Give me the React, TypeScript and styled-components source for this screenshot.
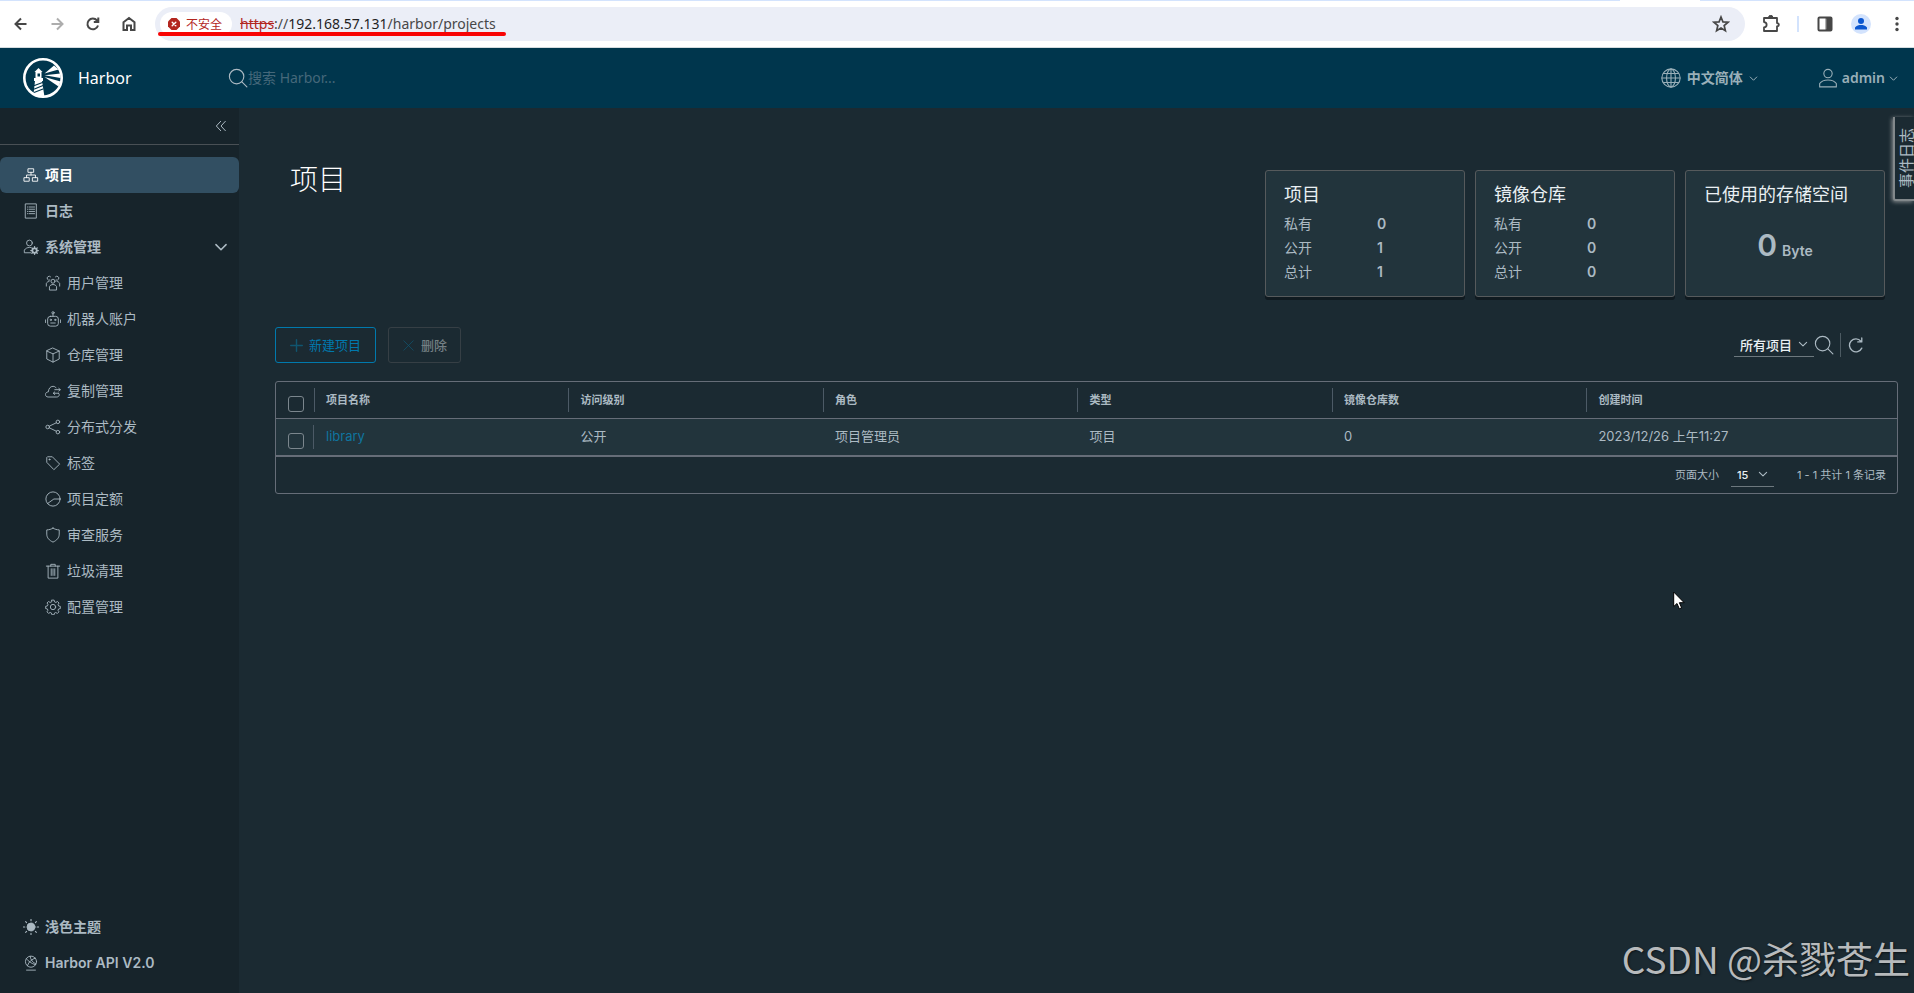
import React from "react";
import styled, { createGlobalStyle } from "styled-components";

const cjk = `"Noto Sans CJK SC", sans-serif`;
const ui = `"Noto Sans", ${cjk}`;
const brand = `Inter, ${cjk}`;

const Global = createGlobalStyle`
  *, *::before, *::after { box-sizing: border-box; }
  html, body, #root { height: 100%; }
  body { margin: 0; background: #1b2a32; color: #acbac3; font: 14px/24px ${brand}; }
  button, input, select { font: inherit; color: inherit; margin: 0; }
  button { background: none; border: 0; padding: 0; cursor: pointer; }
  a { color: inherit; text-decoration: none; }
  h1, h2, ul, dl, dd, p { margin: 0; padding: 0; font-weight: 400; }
  ul { list-style: none; }
`;

const Page = styled.div`
  display: flex;
  flex-direction: column;
  min-height: 100vh;
  position: relative;
  overflow: hidden;
`;

/* ---------- icons ---------- */
const Svg = styled.svg<{ $size: number; $w?: number }>`
  width: ${(p) => p.$size}px;
  height: ${(p) => p.$size}px;
  flex: none;
  display: block;
  fill: none;
  stroke: currentColor;
  stroke-width: ${(p) => p.$w ?? 2};
  stroke-linecap: round;
  stroke-linejoin: round;
`;

const shapes: Record<string, React.ReactNode> = {
  organization: (
    <path d="M12 4h12v8H12zM3 24h11v8H3zM22 24h11v8H22zM18 12v6M8 24v-6h20v6" />
  ),
  list: (
    <>
      <path d="M6 2h24v32H6z" />
      <path d="M10 9h1M14 9h12M10 14h1M14 14h12M10 19h1M14 19h12M10 24h1M14 24h12" />
    </>
  ),
  administrator: (
    <>
      <circle cx="14.5" cy="9" r="6.5" />
      <path d="M17 31H3v-6c2.600-4 6.600-6 11.500-6h3" />
      <circle cx="26" cy="26" r="5" strokeWidth="4" />
      <path d="M26 17.500v2M26 32.500v2M17.500 26h2M32.500 26h2M20 20l1.500 1.500M30.500 30.500L32 32M32 20l-1.500 1.500M20 32l1.500-1.500" strokeWidth="3" />
    </>
  ),
  users: (
    <>
      <circle cx="18" cy="14" r="4.500" />
      <path d="M10 33v-7c2-3.500 5-4.500 8-4.500s6 1 8 4.500v7z" />
      <path d="M11 11.500A4.500 4.500 0 1 1 12.500 4M25 11.500A4.500 4.500 0 1 0 23.500 4M3 25v-6c1-2.500 3-4 6-4.500M33 25v-6c-1-2.500-3-4-6-4.500" />
    </>
  ),
  robot: (
    <>
      <rect x="6" y="12" width="24" height="22" rx="6" />
      <path d="M18 12V7M13 27h10M1 20v6M35 20v6" />
      <circle cx="18" cy="4" r="2.500" />
      <circle cx="13" cy="20" r="1.500" />
      <circle cx="23" cy="20" r="1.500" />
    </>
  ),
  block: <path d="M18 2.500L32 9v18l-14 7-14-7V9zM4 9l14 6.500L32 9M18 15.500V34" />,
  cloud: (
    <>
      <path d="M30 23c2 1.500 2 2.500 2 3.500 0 3-2.500 5-5.500 5H7c-3.500 0-6-2.500-6-5.500 0-3.500 3-6 6.500-6C8 12.500 12 7.500 18 7.500c3 0 5.500 1.200 7 3.500" />
      <path d="M22 15h12M31 12l3.500 3-3.500 3M31 23H19M22 20l-3.500 3 3.500 3" />
    </>
  ),
  share: (
    <>
      <circle cx="6" cy="18" r="4" />
      <circle cx="29" cy="6.500" r="4" />
      <circle cx="29" cy="29.500" r="4" />
      <path d="M10 16l15.500-7.500M10 20l15.500 7.500" />
    </>
  ),
  tag: (
    <>
      <path d="M4 6.500v10L20 33l13-12.500L16.500 4H6.500z" />
      <circle cx="10" cy="10" r="1.200" />
    </>
  ),
  quota: (
    <>
      <circle cx="18" cy="18" r="16" />
      <path d="M34 18H20L6 28" />
    </>
  ),
  shield: <path d="M18 2.500c4 2.500 9 4 14 4V16c0 8.500-5.500 14-14 18C9.500 30 4 24.500 4 16V6.500c5 0 10-1.500 14-4z" />,
  trash: <path d="M3 7h30M7 7v27h22V7M13 7V3h10v4M14 13v15M18 13v15M22 13v15" />,
  cog: (
    <>
      <circle cx="18" cy="18" r="6" />
      <path d="M15.500 2.500h5l1 4 3 1.300 3.600-2.200 3.500 3.500-2.200 3.600 1.300 3 3.800.8v5l-4 1-1.200 3 2.100 3.500-3.500 3.500-3.600-2.100-3 1.200-.8 3.900h-5l-1-4-3-1.200-3.500 2.100-3.500-3.500 2.100-3.500-1.200-3-3.900-.9v-5l4-1 1.200-3-2.200-3.600L8 5.600l3.500 2.200 3-1.300z" />
    </>
  ),
  sun: (
    <>
      <circle cx="18" cy="18" r="9" fill="currentColor" />
      <path d="M18 1v3M18 32v3M1 18h3M32 18h3M6 6l2 2M28 28l2 2M30 6l-2 2M6 30l2-2" strokeWidth="2.500" />
    </>
  ),
  api: (
    <>
      <circle cx="18" cy="15" r="12.500" />
      <path d="M8 34h20M8 9c5 6 11 10 20 13M28 7C20 9 13 15 10 24M16 3c1 8 6 14 13 17" />
    </>
  ),
  search: (
    <>
      <circle cx="15.500" cy="15.500" r="13" />
      <path d="M25 25l9 9" />
    </>
  ),
  world: (
    <>
      <circle cx="18" cy="18" r="16.500" />
      <ellipse cx="18" cy="18" rx="8" ry="16" />
      <path d="M18 2v32M2 18h32M4.500 10h27M4.500 26h27" />
    </>
  ),
  user: (
    <>
      <circle cx="18" cy="10" r="7.500" />
      <path d="M3 34v-6c3-4.500 9-6.500 15-6.500s12 2 15 6.500v6z" />
    </>
  ),
  down: <path d="M5 12l13 13 13-13" />,
  collapse: <path d="M17 4L4 18l13 14M31 4L18 18l13 14" />,
  plus: <path d="M18 2v32M2 18h32" />,
  times: <path d="M5 5l26 26M31 5L5 31" />,
  refresh: <path d="M31 25A14.500 14.500 0 1 1 29 9.500M31 2v9h-9" />,
};

const Icon = ({ name, size = 16, w }: { name: string; size?: number; w?: number }) => (
  <Svg viewBox="0 0 36 36" $size={size} $w={w} aria-hidden="true">
    {shapes[name]}
  </Svg>
);

/* ---------- browser bar ---------- */
const TabEdge = styled.div`
  display: flex;
  justify-content: space-between;
  height: 1px;
  flex: none;
  background: #fff;
`;
const EdgeLine = styled.span<{ $grow: number }>`
  flex: ${(p) => p.$grow} 1 0;
  background: #d3e3fd;
`;
const EdgeGap = styled.span`
  width: 80px;
`;
const BrowserBar = styled.div`
  display: flex;
  align-items: center;
  flex: none;
  height: 47px;
  padding: 0 7px 0 11px;
  background: #fff;
  border-bottom: 1px solid #d5dcdf;
  color: #474747;
`;
const BarButton = styled.button<{ $dim?: boolean; $gap?: number }>`
  display: grid;
  place-items: center;
  width: 20px;
  height: 20px;
  flex: none;
  margin-right: ${(p) => p.$gap ?? 16}px;
  color: ${(p) => (p.$dim ? "#adadad" : "#474747")};
`;
const AddressBar = styled.div`
  display: flex;
  align-items: center;
  flex: 1;
  height: 34px;
  padding: 0 4px 0 5px;
  margin-right: 16px;
  border-radius: 17px;
  background: #ebeef7;
  position: relative;
`;
const SecurityChip = styled.button`
  display: flex;
  align-items: center;
  gap: 6px;
  height: 24px;
  padding: 0 10px 0 8px;
  border-radius: 12px;
  background: #fff;
  color: #b3261e;
  font: 12px/24px ${cjk};
`;
const Url = styled.p`
  flex: 1;
  margin-left: 8px;
  font: 14px/22px ${ui};
  color: #474747;
`;
const Scheme = styled.s`
  color: #b3261e;
`;
const Host = styled.span`
  color: #1f1f1f;
`;
const RedMark = styled.span`
  position: absolute;
  left: 3px;
  top: 25px;
  width: 348px;
  height: 4px;
  border-radius: 2px;
  background: #f80404;
`;
const BarDivider = styled.span`
  width: 2px;
  height: 16px;
  margin-right: 16px;
  background: #d3e3fd;
`;
const Avatar = styled.span`
  display: grid;
  place-items: center;
  width: 20px;
  height: 20px;
  border-radius: 50%;
  background: #d3e3fd;
  color: #0b57d0;
`;

const Browser = () => (
  <>
    <TabEdge>
      <EdgeLine $grow={1620} />
      <EdgeGap />
      <EdgeLine $grow={214} />
    </TabEdge>
    <BrowserBar>
      <BarButton aria-label="Back">
        <Svg viewBox="0 0 16 16" $size={16}><path d="M13.500 8H3M8 2.500L2.500 8 8 13.500" strokeLinecap="butt" strokeLinejoin="miter" /></Svg>
      </BarButton>
      <BarButton aria-label="Forward" $dim>
        <Svg viewBox="0 0 16 16" $size={16}><path d="M2.500 8H13M8 2.500L13.500 8 8 13.500" strokeLinecap="butt" strokeLinejoin="miter" /></Svg>
      </BarButton>
      <BarButton aria-label="Reload">
        <Svg viewBox="0 0 16 16" $size={16}><path d="M13 9.500A5.400 5.400 0 1 1 12 4.500L13 5.500M13.300 1.500v4.500H8.800" strokeLinecap="butt" strokeLinejoin="miter" /></Svg>
      </BarButton>
      <BarButton aria-label="Home">
        <Svg viewBox="0 0 16 16" $size={16}><path d="M2.500 6.200L8 2l5.500 4.200V14H10V9.500H6V14H2.500z" strokeLinejoin="miter" /></Svg>
      </BarButton>
      <AddressBar>
        <SecurityChip>
          <Svg viewBox="0 0 12 12" $size={12} $w={1}>
            <path d="M3.500 0h5L12 3.500v5L8.500 12h-5L0 8.500v-5z" fill="currentColor" stroke="none" />
            <path d="M4.200 4.200l3.600 3.600M7.800 4.200L4.200 7.800" stroke="#fff" strokeWidth="1.400" />
          </Svg>
          不安全
        </SecurityChip>
        <Url>
          <Scheme>https</Scheme>://<Host>192.168.57.131</Host>/harbor/projects
        </Url>
        <BarButton aria-label="Bookmark" $gap={10}>
          <Svg viewBox="0 0 16 16" $size={18} $w={1.5}><path d="M8 1.800l1.700 4.300 4.600.3-3.500 3 1.100 4.500L8 11.500l-3.900 2.400 1.100-4.500-3.500-3 4.600-.3z" strokeLinejoin="miter" /></Svg>
        </BarButton>
        <RedMark />
      </AddressBar>
      <BarButton aria-label="Extensions">
        <Svg viewBox="0 0 18 18" $size={18}><path d="M2 3h13v5c2.500.5 2.500 3 0 3.500V16H2v-3.500c3.500-.5 3.500-5 0-5.500z" strokeWidth="1.800" /><path d="M6.500 2.500a2.200 2.200 0 0 1 4.400 0z" fill="currentColor" strokeWidth="1" /></Svg>
      </BarButton>
      <BarDivider />
      <BarButton aria-label="Side panel">
        <Svg viewBox="0 0 16 16" $size={16}><rect x="1.500" y="1.500" width="13" height="13" rx="1" /><path d="M9.500 2h4.500v12H9.500z" fill="currentColor" strokeWidth="1" /></Svg>
      </BarButton>
      <BarButton aria-label="Profile">
        <Avatar>
          <Svg viewBox="0 0 14 14" $size={14}><circle cx="7" cy="4" r="3" fill="currentColor" stroke="none" /><path d="M1 12.500v-2C2.500 8.500 5 8 7 8s4.500.5 6 2.500v2z" fill="currentColor" stroke="none" /></Svg>
        </Avatar>
      </BarButton>
      <BarButton aria-label="Menu" $gap={0}>
        <Svg viewBox="0 0 16 16" $size={16}><g fill="currentColor" stroke="none"><circle cx="8" cy="2.500" r="1.700" /><circle cx="8" cy="8" r="1.700" /><circle cx="8" cy="13.500" r="1.700" /></g></Svg>
      </BarButton>
    </BrowserBar>
  </>
);

/* ---------- app header ---------- */
const Header = styled.header`
  display: flex;
  align-items: center;
  flex: none;
  height: 60px;
  padding: 0 16px 0 23px;
  background: #00364d;
`;
const Brand = styled.a`
  display: flex;
  align-items: center;
  gap: 15px;
  width: 205px;
  color: #fff;
  font: 16px/24px ${ui};
`;
const Search = styled.label`
  display: flex;
  align-items: center;
  flex: 1;
`;
const SearchInput = styled.input`
  width: 200px;
  padding: 0;
  border: 0;
  outline: 0;
  background: none;
  font: 14px/24px ${ui};
  &::placeholder { color: #45687a; opacity: 1; }
`;
const HeaderMenu = styled.button<{ $gap: number }>`
  display: flex;
  align-items: center;
  gap: ${(p) => p.$gap}px;
  margin-left: 60px;
  font: 600 14px/24px ${ui};
  color: #99afb8;
`;

const Logo = () => (
  <Svg viewBox="0 0 40 40" $size={40} aria-hidden="true">
    <g fill="#fff" stroke="none">
      <path d="M15.500 10l4 4h-1v6h1.500v3h-9v-3h1.500v-6h-1z" />
      <path d="M12 23h7l2.500 16-11-2.500z" />
      <path d="M21.500 15.500L31 7.500l4.500 4z" />
      <path d="M21.500 17.200l16-1.700v4.500z" />
      <path d="M21.500 19l16 4.500-2 5z" />
    </g>
    <path d="M14.500 15.500h2.500v3h-2.500z" fill="#00364d" stroke="none" />
    <path d="M11.500 27.500l8-3M11.500 31l8.500-3.500M11 34.500l9-3.500" stroke="#00364d" strokeWidth="1.200" />
    <circle cx="20" cy="20" r="18.700" stroke="#fff" strokeWidth="2.600" />
  </Svg>
);

/* ---------- side navigation ---------- */
const Body = styled.div`
  display: flex;
  flex: 1;
  min-height: 0;
`;
const Sidebar = styled.nav`
  display: flex;
  flex-direction: column;
  flex: none;
  width: 239px;
  padding-bottom: 12px;
  background: #17242b;
`;
const CollapseRow = styled.div`
  display: flex;
  justify-content: flex-end;
  align-items: center;
  height: 37px;
  padding-right: 12px;
  margin-bottom: 12px;
  border-bottom: 1px solid #495055;
`;
const NavList = styled.ul<{ $fill?: boolean }>`
  flex: ${(p) => (p.$fill ? 1 : "none")};
`;
const NavLink = styled.a<{ $active?: boolean; $child?: boolean }>`
  display: flex;
  align-items: center;
  gap: 6px;
  height: 36px;
  padding: 0 11px 0 ${(p) => (p.$child ? 45 : 23)}px;
  border-radius: 6px;
  font-size: 14px;
  font-weight: ${(p) => (p.$child ? 400 : 600)};
  color: ${(p) => (p.$active ? "#fff" : "#acbac3")};
  background: ${(p) => (p.$active ? "#324f62" : "transparent")};
`;
const NavText = styled.span`
  flex: 1;
`;

const nav = [
  { icon: "organization", text: "项目", active: true },
  { icon: "list", text: "日志" },
  { icon: "administrator", text: "系统管理", open: true },
  { icon: "users", text: "用户管理", child: true },
  { icon: "robot", text: "机器人账户", child: true },
  { icon: "block", text: "仓库管理", child: true },
  { icon: "cloud", text: "复制管理", child: true },
  { icon: "share", text: "分布式分发", child: true },
  { icon: "tag", text: "标签", child: true },
  { icon: "quota", text: "项目定额", child: true },
  { icon: "shield", text: "审查服务", child: true },
  { icon: "trash", text: "垃圾清理", child: true },
  { icon: "cog", text: "配置管理", child: true },
];

/* ---------- main ---------- */
const Main = styled.main`
  flex: 1;
  min-width: 0;
  padding: 62px 16px 0 36px;
`;
const Top = styled.div`
  display: flex;
  justify-content: space-between;
  padding: 0 13px 0 15px;
`;
const Title = styled.h1`
  font: 300 28px/16px ${cjk};
  color: #fff;
`;
const Cards = styled.div`
  display: flex;
  gap: 10px;
`;
const Card = styled.section`
  width: 200px;
  height: 127px;
  padding: 10px 18px;
  border: 1px solid #565a5c;
  border-radius: 3px;
  background: #22343c;
  box-shadow: 0 3px 0 0 #101a20;
`;
const CardTitle = styled.h2`
  font: 400 18px/24px ${cjk};
  color: #eaf0f3;
  margin-bottom: 7px;
`;
const Stats = styled.dl`
  display: grid;
  grid-template-columns: 93px 1fr;
  line-height: 24px;
`;
const StatValue = styled.dd`
  font-weight: 600;
`;
const Storage = styled.p`
  display: flex;
  justify-content: center;
  align-items: baseline;
  gap: 5px;
  margin-top: 24px;
  font-weight: 600;
  line-height: 32px;
`;
const Big = styled.span`
  font-size: 30px;
`;
const Toolbar = styled.div`
  display: flex;
  align-items: center;
  gap: 12px;
  margin: 30px 0 18px;
`;
const Action = styled.button<{ $primary?: boolean }>`
  display: flex;
  align-items: center;
  gap: 6px;
  height: 36px;
  padding: 0 ${(p) => (p.$primary ? 14 : 13)}px;
  border: 1px solid ${(p) => (p.$primary ? "#0079ad" : "#363f45")};
  border-radius: 3px;
  font: ${(p) => (p.$primary ? 400 : 500)} 13px/24px ${cjk};
  color: ${(p) => (p.$primary ? "#0079ad" : "#747f83")};
  svg { color: #10556f; }
`;
const Filters = styled.div`
  display: flex;
  align-items: center;
  margin-left: auto;
  padding-right: 34px;
`;
const SelectWrap = styled.label<{ $width: number; $small?: boolean }>`
  display: flex;
  align-items: center;
  width: ${(p) => p.$width}px;
  height: 24px;
  border-bottom: 1px solid #6d787e;
  font-size: ${(p) => (p.$small ? 11 : 13)}px;
  color: #eaf0f3;
  position: relative;
  svg { position: absolute; right: 6px; top: 6px; color: #acbac3; pointer-events: none; }
`;
const Select = styled.select`
  appearance: none;
  width: 100%;
  height: 24px;
  padding: 0 0 0 6px;
  border: 0;
  outline: 0;
  background: transparent;
  font-weight: 500;
`;
const Divider = styled.span`
  width: 1px;
  height: 24px;
  margin: 0 7px 0 6px;
  background: #4c5a62;
`;

const Grid = styled.div`
  border: 1px solid #666d78;
  border-radius: 3px;
`;
const Table = styled.table`
  width: 100%;
  table-layout: fixed;
  border-collapse: separate;
  border-spacing: 0;
`;
const HeadCell = styled.th<{ $w?: string }>`
  width: ${(p) => p.$w ?? "auto"};
  height: 37px;
  padding: 0;
  text-align: left;
  font-size: 11px;
  font-weight: 700;
  border-bottom: 1px solid #666d78;
`;
const Cell = styled.td`
  height: 36px;
  padding: 0 12px 2px;
  font-size: 13px;
  background: #22343c;
`;
const CheckCell = styled(Cell)`
  padding: 0;
`;
const Ruled = styled.div`
  display: flex;
  align-items: center;
  height: 24px;
  padding-left: 11px;
  border-left: 1px solid #4c5a66;
`;
const CheckBox = styled.label<{ $ruled?: boolean }>`
  display: flex;
  align-items: flex-end;
  height: 24px;
  padding-left: 12px;
  border-right: 1px solid ${(p) => (p.$ruled ? "#4c5a66" : "transparent")};
  input {
    appearance: none;
    width: 16px;
    height: 16px;
    border: 1px solid #7b868d;
    border-radius: 3px;
  }
`;
const Link = styled.a`
  color: #0f75a0;
`;
const Footer = styled.div`
  display: flex;
  justify-content: flex-end;
  align-items: center;
  height: 38px;
  padding-right: 11px;
  border-top: 2px solid #666d78;
  font-size: 11px;
`;
const PageSize = styled.div`
  display: flex;
  align-items: center;
  gap: 12px;
  margin-right: 23px;
`;

/* ---------- overlays ---------- */
const EventTab = styled.button`
  display: flex;
  align-items: center;
  justify-content: flex-end;
  position: absolute;
  right: 0;
  top: 117px;
  width: 21px;
  height: 84px;
  border: 2px solid #82888b;
  border-width: 0 0 2px 2px;
  border-radius: 0 0 0 3px;
  background: #1b2a32;
  box-shadow: -1px 1px 4px #8a8f92;
  font: 15px/16px ${cjk};
`;
const EventText = styled.span`
  display: block;
  writing-mode: vertical-rl;
  text-orientation: sideways;
  transform: rotate(180deg);
`;
const Watermark = styled.p`
  position: absolute;
  right: 4px;
  bottom: 8px;
  font: 400 37px/54px ${cjk};
  color: #b7babc;
  text-shadow: 1px 1px 2px #0d1519;
`;
const Pointer = styled.svg`
  position: absolute;
  left: 1673px;
  top: 591px;
  width: 13px;
  height: 19px;
`;

const columns = ["项目名称", "访问级别", "角色", "类型", "镜像仓库数", "创建时间"];

const StatCard = ({ title, values }: { title: string; values: number[] }) => (
  <Card>
    <CardTitle>{title}</CardTitle>
    <Stats>
      {["私有", "公开", "总计"].map((label, i) => (
        <React.Fragment key={label}>
          <dt>{label}</dt>
          <StatValue>{values[i]}</StatValue>
        </React.Fragment>
      ))}
    </Stats>
  </Card>
);

export default function App() {
  return (
    <Page>
      <Global />
      <Browser />
      <Header>
        <Brand href="#">
          <Logo />
          Harbor
        </Brand>
        <Search>
          <Icon name="search" size={20} />
          <SearchInput aria-label="搜索" placeholder="搜索 Harbor..." />
        </Search>
        <HeaderMenu $gap={6}>
          <Icon name="world" size={20} />
          中文简体
          <Icon name="down" size={9} w={4} />
        </HeaderMenu>
        <HeaderMenu $gap={4}>
          <Icon name="user" size={20} />
          admin
          <Icon name="down" size={9} w={4} />
        </HeaderMenu>
      </Header>
      <Body>
        <Sidebar>
          <CollapseRow>
            <button aria-label="Collapse"><Icon name="collapse" size={12} w={3} /></button>
          </CollapseRow>
          <NavList $fill>
            {nav.map((n) => (
              <li key={n.text}>
                <NavLink href="#" $active={n.active} $child={n.child}>
                  <Icon name={n.icon} />
                  <NavText>{n.text}</NavText>
                  {n.open && <Icon name="down" size={14} w={4} />}
                </NavLink>
              </li>
            ))}
          </NavList>
          <NavList>
            <li><NavLink href="#"><Icon name="sun" />浅色主题</NavLink></li>
            <li><NavLink href="#"><Icon name="api" />Harbor API V2.0</NavLink></li>
          </NavList>
        </Sidebar>
        <Main>
          <Top>
            <Title>项目</Title>
            <Cards>
              <StatCard title="项目" values={[0, 1, 1]} />
              <StatCard title="镜像仓库" values={[0, 0, 0]} />
              <Card>
                <CardTitle>已使用的存储空间</CardTitle>
                <Storage><Big>0</Big>Byte</Storage>
              </Card>
            </Cards>
          </Top>
          <Toolbar>
            <Action $primary><Icon name="plus" size={13} w={4} />新建项目</Action>
            <Action disabled><Icon name="times" size={13} />删除</Action>
            <Filters>
              <SelectWrap $width={80}>
                <Select aria-label="项目类型"><option>所有项目</option></Select>
                <Icon name="down" size={10} w={4} />
              </SelectWrap>
              <button aria-label="搜索项目"><Icon name="search" size={20} /></button>
              <Divider />
              <button aria-label="刷新"><Icon name="refresh" size={16} w={3} /></button>
            </Filters>
          </Toolbar>
          <Grid>
            <Table>
              <thead>
                <tr>
                  <HeadCell $w="38px"><CheckBox><input type="checkbox" aria-label="全选" /></CheckBox></HeadCell>
                  {columns.map((c, i) => (
                    <HeadCell key={c} scope="col" $w={i < 5 ? "15.7%" : undefined}><Ruled>{c}</Ruled></HeadCell>
                  ))}
                </tr>
              </thead>
              <tbody>
                <tr>
                  <CheckCell><CheckBox $ruled><input type="checkbox" aria-label="选择 library" /></CheckBox></CheckCell>
                  <Cell><Link href="#">library</Link></Cell>
                  <Cell>公开</Cell>
                  <Cell>项目管理员</Cell>
                  <Cell>项目</Cell>
                  <Cell>0</Cell>
                  <Cell>2023/12/26 上午11:27</Cell>
                </tr>
              </tbody>
            </Table>
            <Footer>
              <PageSize>
                <span>页面大小</span>
                <SelectWrap $width={43} $small>
                  <Select aria-label="页面大小"><option>15</option></Select>
                  <Icon name="down" size={10} w={4} />
                </SelectWrap>
              </PageSize>
              <span>1 - 1 共计 1 条记录</span>
            </Footer>
          </Grid>
        </Main>
      </Body>
      <EventTab><EventText>事件日志</EventText></EventTab>
      <Watermark>CSDN @杀戮苍生</Watermark>
      <Pointer viewBox="0 0 13 19" aria-hidden="true">
        <path d="M.7 1v14.500l3.300-3 2.300 5.300 2.300-1-2.200-5.100h4.800z" fill="#fff" stroke="#000" strokeWidth="1" />
      </Pointer>
    </Page>
  );
}
